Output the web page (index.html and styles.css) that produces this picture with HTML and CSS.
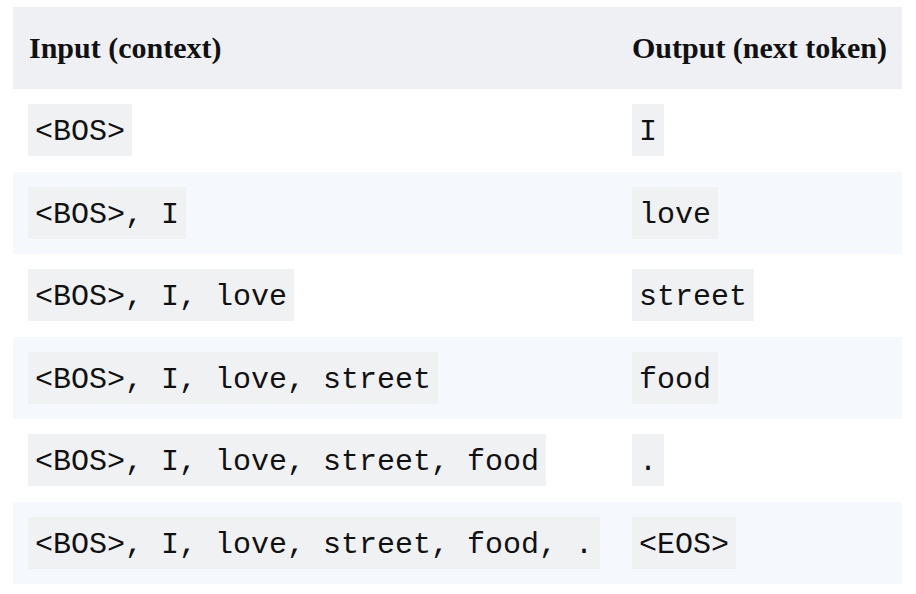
FILE: index.html
```html
<!DOCTYPE html>
<html>
<head>
<meta charset="utf-8">
<link rel="stylesheet" href="styles.css">
</head>
<body>
<table class="tokens">
  <colgroup><col class="c-in"><col class="c-out"></colgroup>
  <thead>
    <tr><th>Input (context)</th><th>Output (next token)</th></tr>
  </thead>
  <tbody>
    <tr><td><code>&lt;BOS&gt;</code></td><td><code>I</code></td></tr>
    <tr><td><code>&lt;BOS&gt;, I</code></td><td><code>love</code></td></tr>
    <tr><td><code>&lt;BOS&gt;, I, love</code></td><td><code>street</code></td></tr>
    <tr><td><code>&lt;BOS&gt;, I, love, street</code></td><td><code>food</code></td></tr>
    <tr><td><code>&lt;BOS&gt;, I, love, street, food</code></td><td><code>.</code></td></tr>
    <tr><td><code>&lt;BOS&gt;, I, love, street, food, .</code></td><td><code>&lt;EOS&gt;</code></td></tr>
  </tbody>
</table>
</body>
</html>
```

FILE: styles.css
```css
html, body {
  margin: 0;
  padding: 0;
  background: #ffffff;
}
.tokens {
  margin: 7px 0 0 13px;
  width: 889px;
  border-collapse: collapse;
  table-layout: fixed;
  color: #111111;
}
.c-in { width: 604px; }
.c-out { width: 285px; }
.tokens th {
  background: #eef0f3;
  height: 82px;
  padding: 0 15px 0 16px;
  text-align: left;
  font-family: "Liberation Serif", "Times New Roman", serif;
  font-weight: bold;
  font-size: 30px;
  white-space: nowrap;
  vertical-align: middle;
}
.tokens th + th {
  padding-left: 15px;
}
.tokens td {
  height: 82.5px;
  padding: 0 15px;
  vertical-align: middle;
  box-sizing: border-box;
}
.tokens tbody tr:nth-child(even) td {
  background: #f5f8fd;
}
.tokens code {
  display: inline-block;
  font-family: "Liberation Mono", "Courier New", monospace;
  font-size: 30px;
  line-height: 38px;
  padding: 9px 7px 5px;
  background: #eff1f3;
  white-space: pre;
}
```
